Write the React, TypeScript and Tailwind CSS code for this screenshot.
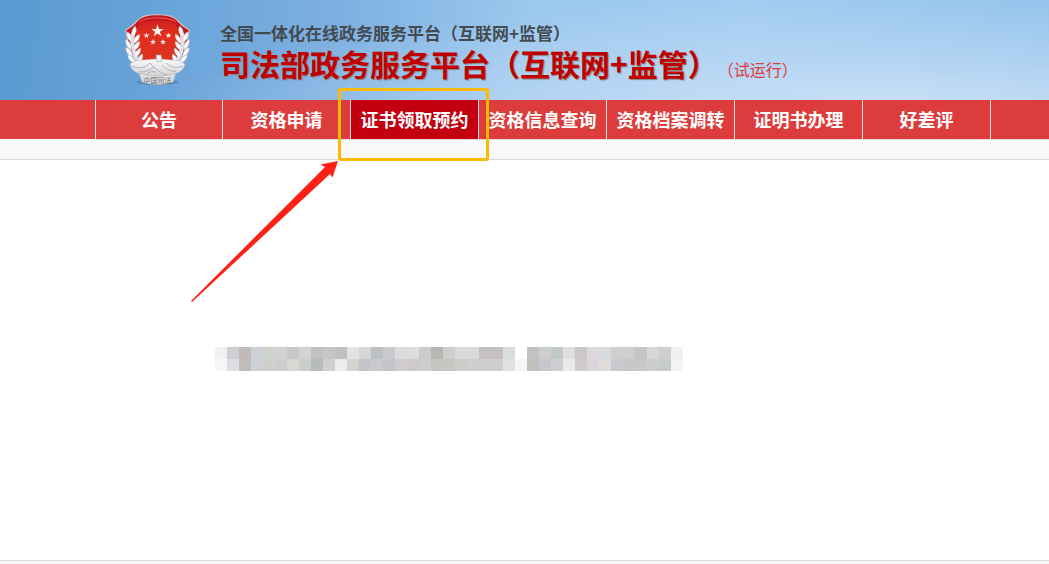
const tabs = ['公告', '资格申请', '证书领取预约', '资格信息查询', '资格档案调转', '证明书办理', '好差评'];
const activeTab = '证书领取预约';

const upperBlocks = [
  'bg-[#f0f0f0]', 'bg-[#cecdd1]', 'bg-[#c2b9b9]', 'bg-[#ccd2d4]', 'bg-[#cfd1cb]', 'bg-[#d1d2d1]', 'bg-[#cac8c6]',
  'bg-[#d2d3d3]', 'bg-[#bfc1c5]', 'bg-[#c4c6c8]', 'bg-[#c1bfbe]', 'bg-[#e3e3e3]', 'bg-[#d8d5d4]', 'bg-[#bcc1c3]',
  'bg-[#c8cbcd]', 'bg-[#dddadf]', 'bg-[#dfdcdd]', 'bg-[#cccdcb]', 'bg-[#b9b5b2]', 'bg-[#cdcfce]', 'bg-[#d9d9d7]',
  'bg-[#dadada]', 'bg-[#c6c1c1]', 'bg-[#c3c1c2]', 'bg-[#d8dddd]', 'bg-white', 'bg-[#c6c1c1]', 'bg-[#cecdcf]',
  'bg-[#c2cac9]', 'bg-[#e0dfdf]', 'bg-[#c9c8c7]', 'bg-[#dcd7dd]', 'bg-[#d7dbdc]', 'bg-[#d0d0d0]', 'bg-[#cecfcd]',
  'bg-[#c5c6c1]', 'bg-[#d6d6d4]', 'bg-[#cecece]', 'bg-[#f0f0f0]',
];

const lowerBlocks = [
  'bg-[#f6f6f6]', 'bg-[#dfdde3]', 'bg-[#bfbebb]', 'bg-[#ccd2d4]', 'bg-[#d0d0cb]', 'bg-[#cbcdcc]', 'bg-[#dad6d4]',
  'bg-[#cccecb]', 'bg-[#b6bbbe]', 'bg-[#cdd0ce]', 'bg-[#edecec]', 'bg-[#d5d2d2]', 'bg-[#c4c4cb]', 'bg-[#c9cacb]',
  'bg-[#c4c5c8]', 'bg-[#cfcdd1]', 'bg-[#cfcaca]', 'bg-[#cdccce]', 'bg-[#c5c5c1]', 'bg-[#c6c7c2]', 'bg-[#cdcecb]',
  'bg-[#cfcfcf]', 'bg-[#cfcfcf]', 'bg-[#cfcfcf]', 'bg-[#e1e1e1]', 'bg-[#f6f6f6]', 'bg-[#c1c0bb]', 'bg-[#c5c5cb]',
  'bg-[#cfcfcf]', 'bg-[#e9ebea]', 'bg-[#cfcbcc]', 'bg-[#dbd6dd]', 'bg-[#dedddb]', 'bg-[#c9cacd]', 'bg-[#c5c8c8]',
  'bg-[#cac8c6]', 'bg-[#cccdce]', 'bg-[#c6cbcb]', 'bg-[#f3f3f3]',
];

const star = '0,-1 0.235,-0.324 0.951,-0.309 0.38,0.124 0.588,0.809 0,0.4 -0.588,0.809 -0.38,0.124 -0.951,-0.309 -0.235,-0.324';
const stars = [
  { x: 32.5, y: 18, r: 6.4 },
  { x: 21.5, y: 22.5, r: 3.1 },
  { x: 43.5, y: 22.5, r: 3.1 },
  { x: 28, y: 29, r: 3.1 },
  { x: 38, y: 29, r: 3.1 },
];
const leaves = [
  { x: 9, y: 18.5, a: 14 },
  { x: 4.5, y: 24, a: -24 },
  { x: 11.5, y: 26, a: 34 },
  { x: 3.5, y: 31.5, a: -28 },
  { x: 11.5, y: 33, a: 34 },
  { x: 4, y: 39, a: -34 },
  { x: 12.5, y: 40, a: 32 },
  { x: 6.5, y: 46, a: -42 },
  { x: 15, y: 46, a: 26 },
];

function Branch() {
  return (
    <g>
      <path d="M8 20C6 32 8 42 16 52" fill="none" stroke="#dfe1e4" strokeWidth="4" />
      {leaves.map((l) => (
        <path
          key={`${l.x}-${l.y}`}
          d="M0 -5.500C2.700 -2.500 2.600 2.500 0 5.500C-2.600 2.500 -2.700 -2.500 0 -5.500Z"
          transform={`translate(${l.x} ${l.y}) rotate(${l.a})`}
          fill="#fafafa"
          stroke="#c3c7cb"
          strokeWidth="0.5"
        />
      ))}
    </g>
  );
}

function Emblem() {
  return (
    <svg viewBox="0 0 65 73" className="h-[73px] w-[65px] shrink-0" role="img" aria-label="中国司法">
      <defs>
        <linearGradient id="shieldRed" x1="0" y1="0" x2="0" y2="1">
          <stop offset="0" stopColor="#cf2020" />
          <stop offset="0.3" stopColor="#e0301f" />
          <stop offset="1" stopColor="#dc3220" />
        </linearGradient>
        <linearGradient id="silver" x1="0" y1="0" x2="0" y2="1">
          <stop offset="0" stopColor="#fbfbfb" />
          <stop offset="1" stopColor="#c9cccf" />
        </linearGradient>
      </defs>
      <ellipse cx="32.5" cy="69" rx="21" ry="3" fill="#54799b" opacity="0.6" />
      <path
        d="M32.5 1.700C42 1.700 49 3 52.500 7.500Q57 13 64.200 17C63 25 62 34 58 42C53 50 44 55 32.500 56C21 55 12 50 7 42C3 34 2 25 0.800 17Q8 13 12.500 7.500C16 3 23 1.700 32.500 1.700Z"
        fill="#c4141c"
        stroke="#c9c2c6"
        strokeWidth="1.2"
      />
      <path d="M15 11C22 6 43 6 50 11Q53 16 56 19Q53 22 52 29L51 46Q45 53 32.500 54Q20 53 14 46L13 29Q12 22 9 19Q12 16 15 11Z" fill="url(#shieldRed)" />
      <path d="M14 9C22 3.500 43 3.500 51 9" fill="none" stroke="#ea7a7c" strokeWidth="0.8" />
      {stars.map((s) => (
        <polygon key={`${s.x}-${s.y}`} points={star} transform={`translate(${s.x} ${s.y}) scale(${s.r})`} fill="#fff5ee" />
      ))}
      <Branch />
      <g transform="translate(65 0) scale(-1 1)">
        <Branch />
      </g>
      <path d="M5 51Q11 46 19 47L30 46H36L46 47Q54 46 60 51Q59 58 50 61L48 66H17L15 61Q6 58 5 51Z" fill="url(#silver)" stroke="#b4b8bc" strokeWidth="0.6" />
      <path d="M7 53Q17 58 25 50Q33 60 43 62M58 53Q48 57 41 50M14 59Q23 59 29 54M22 61Q26 57 31 59M37 52Q45 60 51 58" fill="none" stroke="#a9adb2" strokeWidth="0.9" />
      <path d="M31 42H36L37 48L32 49Z" fill="#f2f2f2" stroke="#a9adb2" strokeWidth="0.7" />
      <path d="M14 60Q32.500 66 51 60L48 69Q32.500 74 17 69Z" fill="#dcddde" stroke="#b0b4b8" strokeWidth="0.6" />
      <text x="32.5" y="70" textAnchor="middle" fontSize="7" fill="#6d7073">中国司法</text>
    </svg>
  );
}

function MosaicRow({ blocks }: { blocks: string[] }) {
  return (
    <div className="flex">
      {blocks.map((color, i) => (
        <span key={i} className={`h-3 w-3 shrink-0 ${color}`} />
      ))}
    </div>
  );
}

export default function App() {
  return (
    <div className="flex min-h-screen flex-col overflow-hidden bg-white font-['Noto_Sans_CJK_SC',sans-serif]">
      <header>
        <div className="flex h-[100px] items-start gap-[30px] bg-[radial-gradient(ellipse_70%_110%_at_85%_110%,#d8e7f9cc_0%,#cbe0f780_45%,transparent_100%),linear-gradient(100deg,#5a99d1_0%,#64a1d7_12%,#7db0e1_32%,#9cc8ee_50%,#a2ccf0_70%,#94c3ec_100%)] pt-[13px] pl-[125px]">
          <Emblem />
          <div className="pt-2 whitespace-nowrap">
            <p className="text-[17px] leading-6 font-bold text-[#444b50]">全国一体化在线政务服务平台（互联网+监管）</p>
            <div className="flex items-baseline">
              <h1 className="text-[30px] leading-9 font-bold text-[#c00000] [text-shadow:1px_1px_1px_#888888]">司法部政务服务平台（互联网+监管）</h1>
              <span className="text-[16px] text-[#dc3b3f]">（试运行）</span>
            </div>
          </div>
        </div>

        <nav className="relative bg-[#dd3c3c] pl-[95px]">
          <ul className="flex">
            {tabs.map((tab) => (
              <li key={tab} className="w-32 shrink-0 border-r border-[#f7dede] first:border-l">
                <a
                  href="#"
                  aria-current={tab === activeTab ? 'page' : undefined}
                  className={`flex h-[39px] items-center justify-center text-[18px] font-bold whitespace-nowrap text-white ${tab === activeTab ? 'bg-[#c2000f]' : ''}`}
                >
                  {tab}
                </a>
              </li>
            ))}
          </ul>
          <div className="pointer-events-none absolute -top-3 left-[338px] h-[73px] w-[151px] rounded-[3px] border-3 border-[#ffb900]" />
          <svg viewBox="0 0 148 142" className="pointer-events-none absolute top-[60px] left-[190px] h-[142px] w-[148px]" aria-hidden="true">
            <path d="M148 1L130.500 4.500L135 7L1 141L2 142L140 14L142.500 17.500Z" fill="#ff2015" />
          </svg>
        </nav>
        <div className="h-[21px] border-b border-[#d9d9d9] bg-[#f9f9f9] pl-[95px]">
          <div className="border-t border-[#dddddd]" />
        </div>
      </header>

      <main className="min-h-[400px] pt-[187px] pl-[215px]">
        <div className="w-max overflow-hidden rounded-[4px]" aria-hidden="true">
          <MosaicRow blocks={upperBlocks} />
          <MosaicRow blocks={lowerBlocks} />
        </div>
      </main>

      <footer className="flex-1 border-t border-[#d9d9d9] bg-[#f9f9f9]" />
    </div>
  );
}
